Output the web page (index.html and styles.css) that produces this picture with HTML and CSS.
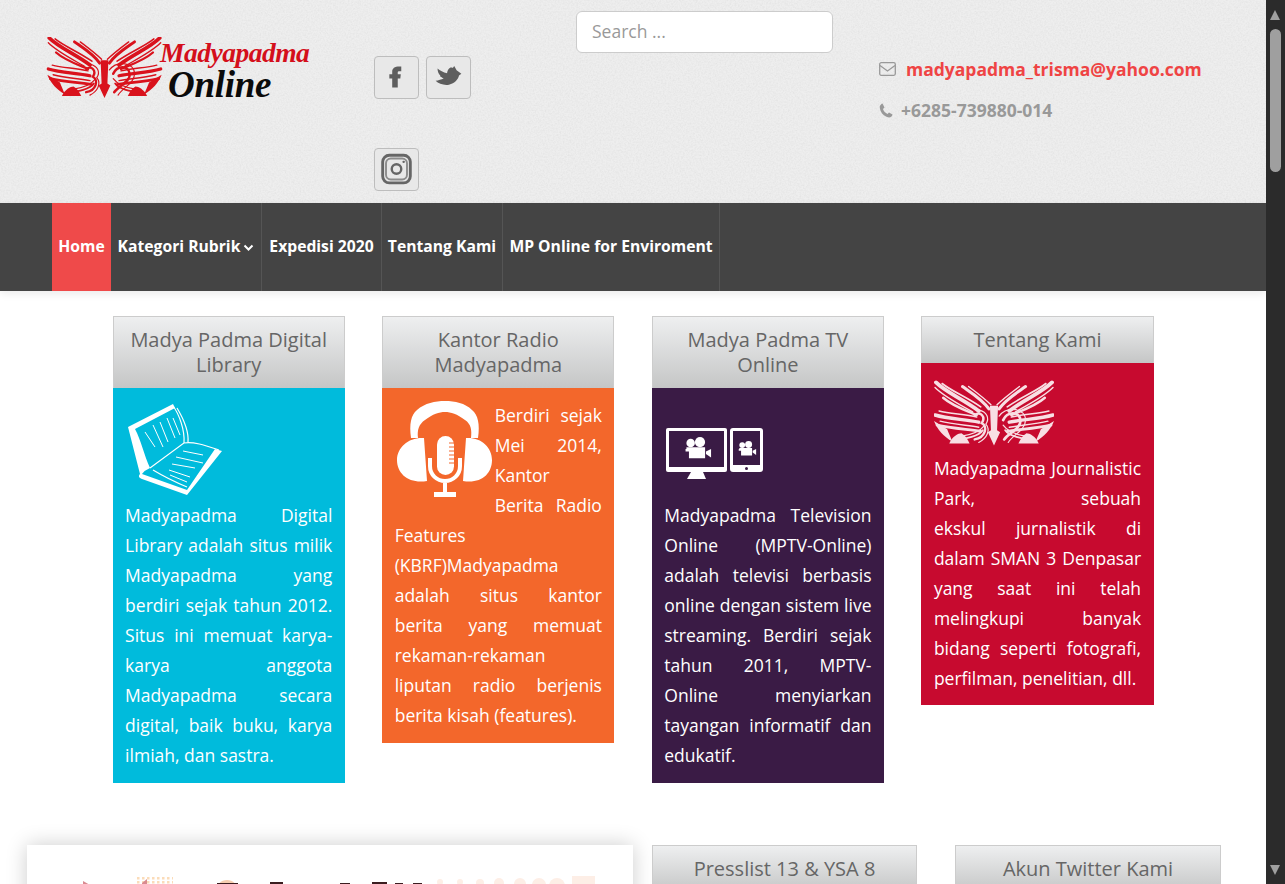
FILE: index.html
```html
<!DOCTYPE html>
<html lang="id">
<head>
<meta charset="utf-8">
<title>Madyapadma Online</title>
<link rel="stylesheet" href="styles.css">
</head>
<body>
<svg class="defs" width="0" height="0" aria-hidden="true">
  <defs>
    <filter id="paper" x="0" y="0" width="100%" height="100%">
      <feTurbulence type="fractalNoise" baseFrequency="0.6" numOctaves="3" seed="4"/>
      <feColorMatrix type="matrix" values="0 0 0 0 0.6  0 0 0 0 0.6  0 0 0 0 0.6  0.36 0.36 0 0 -0.28"/>
    </filter>
    <pattern id="dots" width="5" height="4" patternUnits="userSpaceOnUse"><rect width="2.500" height="2.500" fill="#fbdcb9"/></pattern>
    <g id="half-wing" fill="none" stroke="currentColor" stroke-linecap="round">
      <path stroke-width="3.800" d="M2 1C12 11 28 17 44 29"/>
      <path stroke-width="1.600" d="M8 2C18 10 30 14 46 25"/>
      <path stroke-width="1.400" d="M1 6C10 15 22 21 38 30"/>
      <path stroke-width="2.400" d="M9 16C18 24 30 28 42 33"/>
      <path stroke-width="3.400" d="M1 33C14 37 30 37 44 40"/>
      <path stroke-width="1.400" d="M5 29C16 32 30 32 42 35"/>
      <path stroke-width="2.800" d="M3 43C16 46 32 47 46 49"/>
      <path stroke-width="1.400" d="M6 39C18 42 32 43 44 45"/>
      <path stroke-width="3" d="M28 5C38 12 48 18 54 27"/>
      <path stroke-width="1.400" d="M34 5C42 11 50 17 56 23"/>
      <path stroke-width="1.800" d="M20 58C32 56 44 54 48 48"/>
      <path stroke-width="1.200" d="M26 54C34 53 44 51 50 43"/>
      <path fill="currentColor" stroke="none" d="M0 39C3 47 10 55 18 59C16 54 14 50 13 47Z"/>
      <path fill="currentColor" stroke="none" d="M15 61C18 54 24 51 27 51C31 53 33 57 35 61Z"/>
    </g>
    <g id="wings">
      <use href="#half-wing"/>
      <use href="#half-wing" transform="matrix(-1 0 0 1 118 0)"/>
      <g fill="none" stroke="currentColor" stroke-linecap="round">
        <path stroke-width="2.400" d="M40 33C46 29 51 35 47 41C53 44 51 55 40 57"/>
        <path stroke-width="1.200" d="M44 28C52 30 55 36 51 42C56 48 52 56 44 60"/>
        <path stroke-width="2.600" d="M68 38C72 29 84 29 85 38C86 46 74 50 69 57"/>
        <path stroke-width="1.200" d="M64 34C72 24 90 26 90 38C90 48 78 52 73 60"/>
      </g>
      <path fill="currentColor" d="M55 24H63L62 48L65 50L59 63L53 50L56 48Z"/>
    </g>
    <g id="camera" fill="#fff">
      <circle cx="9" cy="7" r="5"/><circle cx="20" cy="6" r="6"/>
      <path d="M4 12H26V25H7V17H3V14H4Z"/><path d="M27 17L33 14V24L27 20Z"/>
    </g>
  </defs>
</svg>

<header class="masthead">
  <svg class="paper" aria-hidden="true"><rect width="100%" height="100%" filter="url(#paper)"/></svg>
  <a class="logo" href="#">
    <svg class="logo-wings" viewBox="0 0 118 64" aria-hidden="true"><use href="#wings"/></svg>
    <span class="logo-text"><span class="logo-red">Madyapadma</span><span class="logo-black">Online</span></span>
  </a>
  <div class="social">
    <a class="social-btn" href="#" aria-label="Facebook">
      <svg viewBox="0 0 45 43"><path fill="#5e5e5e" d="M18 32V22.500H15V18H18V15.500C18 11.500 21 9.500 27.500 10V15C24.500 14.800 23.800 15 23.800 16.500V18H27L26.500 22.500H23.800V32Z"/></svg>
    </a>
    <a class="social-btn" href="#" aria-label="Twitter">
      <svg viewBox="0 0 45 43"><path fill="#5e5e5e" d="M36 17.500L31 14L28.500 9.500L27 11.500C24 10 21.500 13 21 17C17 16 13.500 14 11 12C11 15 12 18 14 19.500L13.500 20C14.500 21 16 22 17.500 22.500C15 23.500 12 24.500 9 25C12 28 18 30 23 29C29 28 33 23 33.500 19.500Z"/></svg>
    </a>
    <a class="social-btn" href="#" aria-label="Instagram">
      <svg viewBox="0 0 45 43"><rect x="8" y="6.500" width="29" height="29" rx="7" fill="none" stroke="#666" stroke-width="3"/><rect x="11.500" y="10" width="22" height="22" rx="5" fill="none" stroke="#8c8c8c" stroke-width="2"/><circle cx="22.500" cy="21" r="5" fill="none" stroke="#666" stroke-width="2.500"/><circle cx="30" cy="13.500" r="1.300" fill="#666"/></svg>
    </a>
  </div>
  <form class="search"><input class="search-input" type="text" placeholder="Search ..."></form>
  <div class="contact">
    <div class="contact-row">
      <svg class="icon-mail" viewBox="0 0 17 14" aria-hidden="true"><rect x=".7" y=".7" width="15.600" height="12.600" rx="1.500" fill="none" stroke="#999" stroke-width="1.300"/><path d="M1 3.500L8.500 9L16 3.500" fill="none" stroke="#999" stroke-width="1.300"/></svg>
      <a class="contact-mail" href="#">madyapadma_trisma@yahoo.com</a>
    </div>
    <div class="contact-row">
      <svg class="icon-phone" viewBox="0 0 14 15" aria-hidden="true"><path fill="#999" d="M3.500 .5L5.500 4.500L4 6C4.500 8 6.500 10 8.500 11L10 9.500L13.500 11.500C13.500 13 12 14.500 10 14.500C5 14 1 9 .7 4C.7 2.500 2 1 3.500 .5Z"/></svg>
      <span class="contact-phone">+6285-739880-014</span>
    </div>
  </div>
</header>

<nav class="mainnav">
  <a class="nav-item nav-home" href="#">Home</a>
  <a class="nav-item nav-kategori" href="#">Kategori Rubrik<svg class="chev" viewBox="0 0 10 7" aria-hidden="true"><path d="M1 1.500L5 5.500L9 1.500" fill="none" stroke="#fff" stroke-width="2"/></svg></a>
  <a class="nav-item nav-expedisi" href="#">Expedisi 2020</a>
  <a class="nav-item nav-tentang" href="#">Tentang Kami</a>
  <a class="nav-item nav-mp" href="#">MP Online for Enviroment</a>
</nav>

<main>
  <section class="features">
    <article class="card">
      <h2 class="card-title">Madya Padma Digital Library</h2>
      <div class="card-body blue">
        <svg class="pic" viewBox="-2 0 100 100" aria-hidden="true">
          <path fill="#fff" d="M1 27L46 4L48 8L8 29C14 40 17 55 23 68Q18 70 15 74L60 90L88 49L95 51L60 95L15 79C12 78 11 76 13 74Z"/>
          <path fill="none" stroke="#fff" stroke-width="1.200" d="M46 6C52 14 58 30 57 43L23 68M57 43C66 41 80 46 92 50M50 8C56 18 62 30 61 42M26 70C36 76 48 82 60 87"/>
          <path fill="none" stroke="#fff" stroke-width="1" d="M18 32L28 47M26 25L36 47M33 22L41 42M40 18L48 38M46 18L53 35M56 51L76 55M49 57L76 63M45 64L68 68M42 70L63 77M43 75L60 82"/>
        </svg>
        <p class="copy">Madyapadma Digital Library adalah situs milik Madyapadma yang berdiri sejak tahun 2012. Situs ini memuat karya-karya anggota Madyapadma secara digital, baik buku, karya ilmiah, dan sastra.</p>
      </div>
    </article>
    <article class="card">
      <h2 class="card-title">Kantor Radio Madyapadma</h2>
      <div class="card-body orange">
        <svg class="pic pic-float" viewBox="0 0 100 100" aria-hidden="true">
          <path fill="#fff" d="M16 38C14 24 16 15 22 10C30 3 40 1 50 1C60 1 70 3 77 10C83 15 85 24 83 38H76C77 30 76 24 70 20C62 14 56 12 50 12C44 12 38 14 30 20C24 24 22 30 23 38Z"/>
          <path fill="#fff" d="M29 38L32 81C14 84 2 74 2 60C2 47 14 37 29 38ZM71 38L68 81C86 84 97 74 97 60C97 47 86 37 71 38Z"/>
          <rect x="42" y="36" width="17" height="39" rx="8.500" fill="#fff"/>
          <path fill="none" stroke="#fff" stroke-width="4" d="M35 58V66C35 75 42 81 50 81C58 81 65 75 65 66V58M50 81V92"/>
          <rect x="39" y="92" width="22" height="5" fill="#fff"/>
          <path stroke="#f3672b" stroke-width="1" d="M54 43H59M54 47H59M54 51H59M54 55H59M54 59H59M54 63H59"/>
        </svg>
        <p class="copy">Berdiri sejak Mei 2014, Kantor Berita Radio Features (KBRF)Madyapadma adalah situs kantor berita yang memuat rekaman-rekaman liputan radio berjenis berita kisah (features).</p>
      </div>
    </article>
    <article class="card">
      <h2 class="card-title">Madya Padma TV Online</h2>
      <div class="card-body purple">
        <svg class="pic" viewBox="-1 0 100 100" aria-hidden="true">
          <rect x="1" y="28" width="61" height="44" rx="2" fill="#fff"/>
          <rect x="4" y="31" width="55" height="36" fill="#3a1b45"/>
          <path fill="#fff" d="M26 72H38L41 79H22Z"/>
          <use href="#camera" transform="translate(18 37) scale(.85)"/>
          <rect x="65" y="28" width="33" height="44" rx="3" fill="#fff"/>
          <rect x="68" y="31" width="27" height="34" fill="#3a1b45"/>
          <circle cx="81.500" cy="68.500" r="1.500" fill="#3a1b45"/>
          <use href="#camera" transform="translate(72 41) scale(.58)"/>
        </svg>
        <p class="copy">Madyapadma Television Online (MPTV-Online) adalah televisi berbasis online dengan sistem live streaming. Berdiri sejak tahun 2011, MPTV-Online menyiarkan tayangan informatif dan edukatif.</p>
      </div>
    </article>
    <article class="card">
      <h2 class="card-title">Tentang Kami</h2>
      <div class="card-body crimson">
        <svg class="pic-wide" viewBox="0 0 118 64" aria-hidden="true"><use href="#wings"/></svg>
        <p class="copy">Madyapadma Journalistic Park, sebuah ekskul&nbsp;jurnalistik di dalam SMAN 3 Denpasar yang saat ini telah melingkupi&nbsp;banyak bidang&nbsp;seperti fotografi, perfilman, penelitian, dll.</p>
      </div>
    </article>
  </section>

  <section class="lower">
    <div class="poster">
      <svg class="poster-art" viewBox="0 0 606 60" aria-hidden="true">
        <rect x="108" y="31" width="38" height="9" fill="url(#dots)"/>
        <path fill="#d98a90" d="M56 36L70 44H56Z"/>
        <path fill="#d98a90" d="M115 38L120 34V44H115Z"/>
        <circle cx="200" cy="46" r="11" fill="#f6cdb0"/>
        <g fill="#3b1d20">
          <rect x="190" y="38" width="21" height="8"/><rect x="243" y="37" width="13" height="8"/><rect x="313" y="38" width="10" height="8"/><rect x="345" y="37" width="15" height="8"/><rect x="368" y="38" width="8" height="8"/><rect x="386" y="38" width="9" height="8"/>
        </g>
        <g fill="#fdeee6">
          <circle cx="413" cy="37" r="3"/><circle cx="433" cy="37" r="3"/><circle cx="453" cy="38" r="4"/><circle cx="472" cy="38" r="5"/><circle cx="493" cy="39" r="6"/><circle cx="512" cy="40" r="7"/><circle cx="530" cy="41" r="8"/>
          <rect x="545" y="31" width="23" height="20"/>
        </g>
      </svg>
    </div>
    <aside class="card side-a"><h2 class="card-title">Presslist 13 &amp; YSA 8</h2></aside>
    <aside class="card side-b"><h2 class="card-title">Akun Twitter Kami</h2></aside>
  </section>
</main>

<div class="scrollbar" aria-hidden="true">
  <span class="arrow-up"></span>
  <span class="thumb"></span>
  <span class="arrow-down"></span>
</div>
</body>
</html>
```

FILE: styles.css
```css
* { box-sizing: border-box; }
html, body { height: 884px; overflow: hidden; }
body {
  margin: 0;
  padding-right: 19px;
  background: #fff;
  font-family: "Open Sans", "Liberation Sans", sans-serif;
  color: #fff;
}
a { text-decoration: none; color: inherit; }
.defs { position: absolute; }

/* Header */
.masthead {
  position: relative;
  height: 203px;
  display: flex;
  align-items: flex-start;
  padding-left: 46px;
  background: #eeeeee;
}
.paper { position: absolute; inset: 0; width: 100%; height: 100%; }
.logo, .social, .search, .contact { position: relative; }
.logo {
  display: flex;
  width: 328px;
  margin-top: 37px;
  align-items: flex-start;
}
.logo-wings { width: 117px; height: 62px; flex: none; color: #d9121c; filter: blur(.3px); }
.logo-text { display: flex; flex-direction: column; margin-left: -3px; font-family: "Liberation Serif", serif; font-style: italic; font-weight: 700; }
.logo-red { color: #d40f1b; font-size: 27.500px; line-height: 30px; margin-top: 1px; width: 150px; white-space: nowrap; letter-spacing: -.5px; }
.logo-black { color: #0b0b0b; font-size: 37px; line-height: 34px; margin-left: 8px; letter-spacing: -.3px; }

.social {
  display: flex;
  flex-wrap: wrap;
  align-content: flex-start;
  gap: 49px 7px;
  width: 110px;
  margin-top: 56px;
}
.social-btn {
  display: block;
  width: 45px;
  height: 43px;
  background: #e8e8e8;
  border: 1px solid #bdbdbd;
  border-radius: 4px;
}
.social-btn svg { display: block; width: 43px; height: 41px; filter: blur(.4px); }

.search { margin-left: 92px; margin-top: 11px; width: 257px; }
.search-input {
  display: block;
  width: 100%;
  height: 42px;
  padding: 0 15px 2px;
  background: #fff;
  border: 1px solid #ccc;
  border-radius: 6px;
  font: 17.500px "Open Sans", sans-serif;
  color: #555;
}
.search-input::placeholder { color: #999; opacity: 1; }

.contact { margin-left: 46px; margin-top: 54px; }
.contact-row { display: flex; align-items: center; height: 30px; margin-bottom: 11px; font-size: 17.500px; font-weight: 700; white-space: nowrap; }
.icon-mail { width: 17px; height: 14px; margin-right: 10px; }
.icon-phone { width: 14px; height: 15px; margin-right: 8px; }
.contact-mail { color: #ef4444; }
.contact-phone { color: #999; }

/* Nav */
.mainnav {
  position: relative;
  height: 88px;
  display: flex;
  padding-left: 52px;
  background: #444;
  box-shadow: 0 3px 8px rgba(0, 0, 0, .08);
}
.nav-item {
  display: flex;
  align-items: center;
  justify-content: center;
  padding-bottom: 2px;
  font-size: 15.700px;
  font-weight: 700;
  white-space: nowrap;
  border-right: 1px solid #555;
}
.nav-home { width: 59px; background: #ef4a4a; border-right: 0; }
.nav-kategori { width: 151px; }
.nav-expedisi { width: 120px; }
.nav-tentang { width: 121px; }
.nav-mp { width: 217px; }
.chev { width: 11px; height: 7px; margin-left: 3px; margin-top: 2px; }

/* Cards */
.features {
  display: grid;
  grid-template-columns: repeat(4, 1fr);
  gap: 37.400px;
  align-items: start;
  width: 1041px;
  margin: 25px 0 0 112.600px;
}
.card-title {
  margin: 0;
  padding: 10px 12px 11px;
  min-height: 47px;
  border: 1px solid #ccc;
  border-bottom: 0;
  background: linear-gradient(#eeeff0, #c5c6c6);
  color: #666;
  font-size: 20px;
  font-weight: 400;
  line-height: 25px;
  text-align: center;
}
.card-body { padding: 12px 12.500px 13px; }
.card-body::after { content: ""; display: block; clear: both; }
.blue { background: #00bbdc; }
.orange { background: #f3672b; }
.purple { background: #3a1b45; }
.crimson { background: #c70a2f; padding-bottom: 12px; }
.pic { display: block; width: 100px; height: 100px; }
.pic-float { float: left; }
.pic-wide { display: block; width: 120px; height: 68px; margin: 5px 0 5px; color: #f8dfe4; }
.copy {
  margin: 0;
  font-size: 17.500px;
  line-height: 30px;
  text-align: justify;
}

/* Lower row */
.lower {
  display: flex;
  align-items: flex-start;
  margin: 62px 0 0 27px;
}
.poster {
  width: 606px;
  height: 300px;
  margin-right: 19px;
  background: #fff;
  box-shadow: 0 0 20px rgba(0, 0, 0, .2);
}
.poster-art { display: block; width: 606px; height: 60px; }
.side-a { width: 265px; margin-right: 38px; flex: none; }
.side-b { width: 266px; flex: none; }

/* Scrollbar */
.scrollbar {
  position: absolute;
  top: 0;
  right: 0;
  width: 19px;
  height: 884px;
  background: #2b2b2b;
}
.thumb {
  position: absolute;
  left: 4px;
  top: 29px;
  width: 11px;
  height: 143px;
  border-radius: 6px;
  background: #9f9f9f;
}
.arrow-up, .arrow-down {
  position: absolute;
  left: 4px;
  border-left: 5.500px solid transparent;
  border-right: 5.500px solid transparent;
}
.arrow-up { top: 10px; border-bottom: 10px solid #9f9f9f; }
.arrow-down { bottom: 9px; border-top: 10px solid #9f9f9f; }
```
